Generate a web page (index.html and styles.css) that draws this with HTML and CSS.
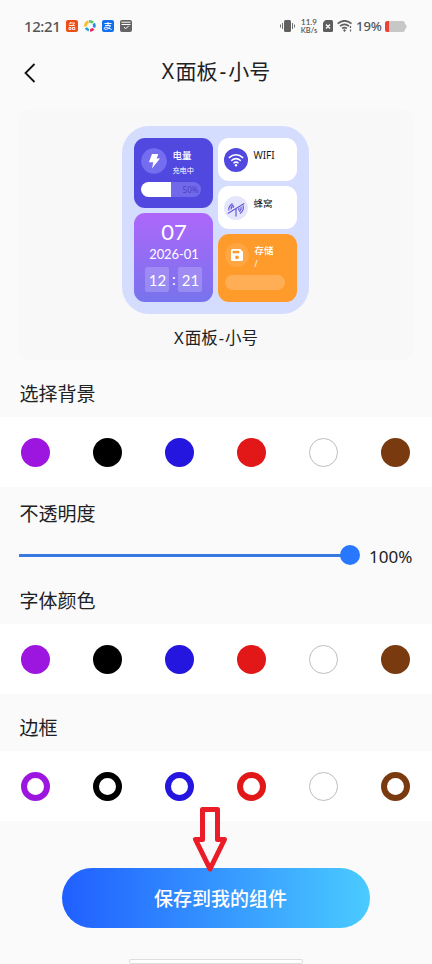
FILE: index.html
```html
<!DOCTYPE html>
<html lang="zh-CN">
<head>
<meta charset="utf-8">
<meta name="viewport" content="width=device-width, initial-scale=1">
<title>X面板-小号</title>
<link rel="stylesheet" href="styles.css">
</head>
<body>
<header class="status">
  <span class="clock">12:21</span>
  <svg class="app" viewBox="0 0 12 12"><rect width="12" height="12" rx="2" fill="#ee4d16"/><path d="M5 2 3 4.500M4 3h4.500L7 5M3 5.500h5.800M3 7.500h2v2H3zM6.500 7.500h2.400v2H6.500z" fill="none" stroke="#fff" stroke-width=".9"/></svg>
  <svg class="app" viewBox="0 0 12 12" fill="none" stroke-width="2.700"><path d="M1.500 6.500A4.500 4.500 0 0 1 4.500 1.800" stroke="#f9bd27"/><path d="M5 1.500a4.500 4.500 0 0 1 4 1.200" stroke="#55c970"/><path d="M9.700 3.500a4.500 4.500 0 0 1 .3 4" stroke="#248bea"/><path d="M9.400 8.600A4.500 4.500 0 0 1 6 10.400" stroke="#e9295d"/><path d="M4.900 10.200A4.500 4.500 0 0 1 2 7.700" stroke="#20a9d8"/></svg>
  <svg class="app" viewBox="0 0 12 12"><rect width="12" height="12" rx="2" fill="#1470ec"/><path d="M2.500 3.500h7M6 2v3.700M3 5.600h5.500C7.500 8 5 10 3 9.300c-1.500-.6-.8-2.400 1-2.100 1.800.2 3.500 1.500 5.700 2.300" fill="none" stroke="#fff"/></svg>
  <svg class="app" viewBox="0 0 12 12"><rect width="12" height="12" rx="2" fill="#646464"/><path d="M1.500 2.200h9M1.500 4.500h9M4 7l1.700 1.800L8.600 5.900" fill="none" stroke="#fff" stroke-width="1"/></svg>
  <svg class="vibrate" viewBox="0 0 15 12"><rect x="4" y="0" width="7" height="12" rx="1.500" fill="#606060"/><path d="M2.500 3v6M.5 4.500v3M12.500 3v6M14.500 4.500v3" stroke="#707070"/></svg>
  <span class="rate"><span>11.9</span><span>KB/s</span></span>
  <svg class="sim" viewBox="0 0 10 12"><path d="M2.500 0H8.500Q10 0 10 1.500v9Q10 12 8.500 12h-7Q0 12 0 10.500V2.500z" fill="#5e5e5e"/><path d="m3 4.500 4 4m0-4-4 4" stroke="#fff" stroke-width="1.300"/></svg>
  <svg class="signal" viewBox="0 0 16 12" fill="none" stroke="#606060"><path d="M.7 3.700Q7.500-2.100 14.500 3.700M3 6.200q4.500-3.800 9 0M5.200 8.500q2.300-1.900 4.600 0" stroke-width="1.700"/><circle cx="7.500" cy="10.500" r=".8" fill="#606060"/><path d="M13.500 6v2m0 1.500v2" stroke-width="1.200"/></svg>
  <span class="percent">19%</span>
  <svg class="battery" viewBox="0 0 22 11"><rect width="20" height="11" rx="2.500" fill="#c7c7c7"/><path d="M20 3q1.500 0 1.500 2.500T20 8z" fill="#c7c7c7"/><path d="M4 0H2.500Q0 0 0 2.500v6Q0 11 2.500 11H4z" fill="#ec4135"/></svg>
</header>
<nav class="nav">
  <svg class="back" viewBox="0 0 12 20"><path d="M10.500 1 1.500 10l9 9" fill="none" stroke="#111" stroke-width="1.800"/></svg>
  <h1><span class="latin">X</span>面板<span class="dash">-</span>小号</h1>
</nav>
<main>
  <section class="preview">
    <div class="panel">
      <div class="column">
        <div class="tile power">
          <div class="head">
            <svg class="badge power-badge" viewBox="0 0 26 26"><circle cx="13" cy="13" r="12.800" fill="#756df0"/><path d="M11 6h6.300l-1.600 4.600h3.300L11 20.500l1.300-6.300H7.900z" fill="#fff"/></svg>
            <div class="labels"><b>电量</b><span>充电中</span></div>
          </div>
          <div class="meter"><span>50%</span></div>
        </div>
        <div class="tile date">
          <div class="day">07</div>
          <div class="month">2026-01</div>
          <div class="time"><span>12</span><i>:</i><span>21</span></div>
        </div>
      </div>
      <div class="column">
        <div class="tile white">
          <svg class="badge" viewBox="0 0 24 24"><circle cx="12" cy="12" r="12" fill="#5048df"/><path d="M4.800 9.900q7.200-6.400 14.400 0M7.200 12.700q4.800-4.200 9.600 0M9.500 15.200q2.500-2.100 5 0" fill="none" stroke="#fff" stroke-width="1.500"/><circle cx="12" cy="17.200" r="1.200" fill="#fff"/></svg>
          <span class="wifi">WIFI</span>
        </div>
        <div class="tile white">
          <svg class="badge" viewBox="0 0 24 24"><circle cx="12" cy="12" r="12" fill="#e5e5fb"/><g fill="none" stroke="#665cd8" stroke-width="1.200"><path d="m3.800 17.500 16.400-10M12 13v7.500M5 14.500q-1-4 3.500-7M7.200 13.300q-.5-2.500 2-4.500M9 12q0-1.300 1.100-2M19 9.500q1.500 4.500-3 8M17 11q.8 2.500-1.700 4.700M14.900 12q.6 1.200-.7 2.300"/></g></svg>
          <span>蜂窝</span>
        </div>
        <div class="tile storage">
          <div class="head">
            <svg class="badge" viewBox="0 0 24 24"><circle cx="12" cy="12" r="12" fill="#ffa642"/><path d="M7.500 6h7.800L18 8.700v7.800q0 1.500-1.500 1.500h-9Q6 18 6 16.500v-9Q6 6 7.500 6z" fill="#fff"/><path d="M7.700 7.800h6.500v2.500H7.700z" fill="#ff9b2b"/><circle cx="12" cy="14.300" r="1.900" fill="#ff9b2b"/></svg>
            <div class="labels"><b>存储</b><span>/</span></div>
          </div>
          <div class="track"></div>
        </div>
      </div>
    </div>
    <p class="caption"><span class="latin">X</span>面板<span class="dash">-</span>小号</p>
  </section>
  <h2 class="first">选择背景</h2>
  <div class="swatches"><i class="purple"></i><i class="black"></i><i class="blue"></i><i class="red"></i><i class="none"></i><i class="brown"></i></div>
  <h2 class="opacity">不透明度</h2>
  <div class="slider"><div class="rail"><i></i></div><span>100%</span></div>
  <h2 class="font">字体颜色</h2>
  <div class="swatches"><i class="purple"></i><i class="black"></i><i class="blue"></i><i class="red"></i><i class="none"></i><i class="brown"></i></div>
  <h2 class="border">边框</h2>
  <div class="swatches rings"><i class="purple"></i><i class="black"></i><i class="blue"></i><i class="red"></i><i class="none"></i><i class="brown"></i></div>
</main>
<footer>
  <button class="save">保存到我的组件</button>
  <svg class="arrow" viewBox="0 0 34 66"><path d="M9.500 2.500h15v30h7L17 62 2.500 32.500h7z" fill="none" stroke="#e91c27" stroke-width="5" stroke-linejoin="round"/></svg>
  <div class="home"></div>
</footer>
</body>
</html>
```
FILE: styles.css
```css
* { box-sizing: border-box; }
body { margin: 0; width: 432px; height: 964px; overflow: hidden; background: #fafafa; color: #202124; font-family: "Noto Sans", "Noto Sans CJK SC", sans-serif; }
svg { display: block; flex: none; }
h1, h2, p { margin: 0; font-weight: 400; }
i, b { font-style: normal; }

.status { display: flex; align-items: center; height: 52px; padding-left: 24px; color: #555; }
.clock { width: 42px; font-size: 15px; line-height: 20px; letter-spacing: -.4px; font-weight: 500; }
.app { width: 12px; height: 12px; margin-right: 6px; }
.vibrate { width: 15px; height: 12px; margin-left: 142px; }
.rate { display: flex; flex-direction: column; align-items: center; width: 20px; margin: 0 4px; font: 600 8px/9px Lato, sans-serif; white-space: nowrap; }
.rate span:last-child { font-size: 7.500px; line-height: 8px; }
.sim { width: 10px; height: 12px; }
.signal { width: 16px; height: 12px; margin-left: 4px; }
.percent { width: 29px; margin-left: 3px; font-size: 13px; line-height: 18px; font-weight: 500; }
.battery { width: 22px; height: 11px; }

.nav { position: relative; display: flex; height: 57px; align-items: flex-start; justify-content: center; }
.back { position: absolute; left: 24px; top: 11px; width: 12px; height: 20px; }
h1 { font-size: 21px; line-height: 38px; white-space: nowrap; }
h1 .latin { letter-spacing: 1.5px; }
h1 .dash { letter-spacing: 2px; margin-left: 2px; }

.preview { height: 251px; margin: 0 19px; padding-top: 17px; border-radius: 10px; background: #f8f8f8; }
.panel { display: flex; gap: 5px; width: 187px; height: 188px; margin: 0 0 0 103.4px; padding: 12px; border-radius: 27px; background: #d4ddfd; }
.column { display: flex; flex-direction: column; gap: 5px; width: 79px; }
.tile { border-radius: 11px; }
.head { display: flex; }
.badge { width: 24px; height: 24px; }
.labels { display: flex; flex-direction: column; white-space: nowrap; }
.labels b { font-size: 9.500px; line-height: 16px; font-weight: 500; }
.power { height: 69.500px; padding: 10px 7px 0; background: #5048df; color: #fff; }
.power-badge { width: 26px; height: 26px; }
.power .labels { height: 26px; padding-left: 5px; }
.power .labels b { line-height: 15px; }
.power .labels span { font-size: 7.200px; line-height: 15px; }
.meter { display: flex; justify-content: flex-end; align-items: center; width: 60px; height: 15px; margin-top: 8px; padding-right: 3px; border-radius: 8px; background: linear-gradient(90deg, #fff 50%, #7169ea 50%); color: #4941c4; font-size: 8px; line-height: 15px; }
.date { height: 89px; padding-top: 5px; background: linear-gradient(#ad67fa, #7873ed); color: #fff; text-align: center; font-family: Lato, sans-serif; }
.day { font-size: 22px; line-height: 28px; }
.month { font-size: 13px; line-height: 17px; letter-spacing: -.1px; }
.time { display: flex; justify-content: center; margin-top: 4px; line-height: 26px; font-size: 15px; }
.time span { width: 24px; height: 25px; border-radius: 2px; background: #ffffff30; }
.time i { width: 9px; line-height: 25px; }
.white { display: flex; height: 43px; padding: 10px 6px; background: #fff; font-size: 9.500px; line-height: 15px; color: #17171d; }
.white span { margin-left: 5px; }
.white .wifi { font-size: 10px; line-height: 15px; }
.storage { height: 67.500px; padding: 9px 7px; background: #ff9b2b; color: #fff; }
.storage .labels { height: 24px; padding-left: 5px; }
.storage .labels span { font-size: 8px; line-height: 9px; }
.track { width: 60px; height: 15px; margin-top: 8px; border-radius: 8px; background: #ffae55; }
.caption { text-align: center; font-size: 16.500px; line-height: 24px; margin-top: 12px; }
.caption .latin { letter-spacing: 1px; }
.caption .dash { margin: 0 1px; }

h2 { padding-left: 19.500px; font-size: 19px; line-height: 28px; }
.first { height: 57px; padding-top: 20px; }
.opacity { height: 53px; padding-top: 13px; }
.font { height: 54px; padding-top: 17px; }
.border { height: 57px; padding-top: 20px; }
.swatches { display: flex; justify-content: space-between; align-items: center; height: 70px; padding: 0 21.600px 0 21.400px; background: #fff; color: #c2c2c2; }
.swatches i { width: 29px; height: 29px; border-radius: 50%; background: currentColor; }
.rings i { border: 6px solid currentColor; background: #fff; }
.swatches .purple { color: #9d16e0; }
.swatches .black { color: #000; }
.swatches .blue { color: #2415df; }
.swatches .red { color: #e21717; }
.swatches .brown { color: #793a10; }
.swatches .none { border: 1px solid #bdbdbd; background: #fff; }
.slider { display: flex; align-items: center; height: 30px; padding-left: 19px; font-size: 17px; line-height: 24px; }
.rail { display: flex; align-items: center; justify-content: flex-end; width: 341px; height: 20px; background: linear-gradient(#3879df, #3879df) 0 9px / 331px 3px no-repeat; }
.rail i { width: 20px; height: 20px; border-radius: 50%; background: #2878ff; }
.slider span { margin: 3px 0 0 9px; }

footer { position: relative; height: 143px; padding-top: 47px; }
.save { display: block; width: 308px; height: 60px; margin-left: 62px; padding: 0 0 0 9px; border: 0; border-radius: 30px; background: linear-gradient(90deg, #205fff, #4acbff); color: #fff; font: 500 19px/60px "Noto Sans CJK SC", sans-serif; }
.arrow { position: absolute; left: 193px; top: -14px; width: 34px; height: 66px; }
.home { width: 174px; height: 5px; margin: 31px 0 0 129px; border: 1px solid #dedede; border-radius: 2px; background: #fff; }
```
